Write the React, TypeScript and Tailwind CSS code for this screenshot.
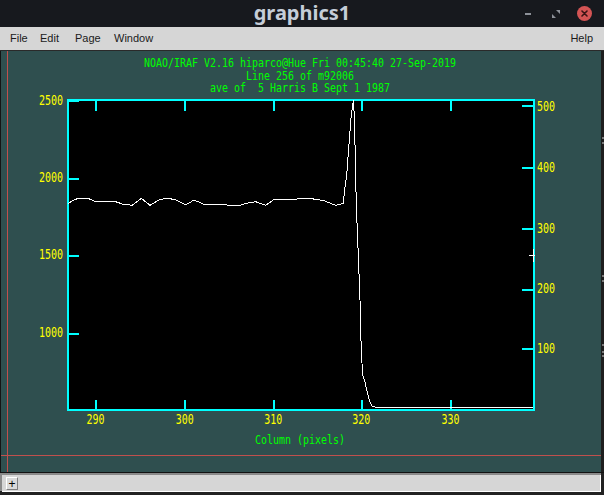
import React from "react";

const MONO = "'DejaVu Sans Mono', 'Liberation Mono', monospace";

function Lbl({
  x,
  y,
  t,
  anchor = "start",
  fill,
  size = 13.5,
}: {
  x: number;
  y: number;
  t: string;
  anchor?: "start" | "middle" | "end";
  fill: string;
  size?: number;
}) {
  return (
    <text
      x={x}
      y={y}
      fill={fill}
      fontFamily={MONO}
      fontSize={size}
      textAnchor={anchor}
      textLength={t.length * 6}
      lengthAdjust="spacingAndGlyphs"
      xmlSpace="preserve"
    >
      {t}
    </text>
  );
}

const curve: [number, number][] = [
  [68, 204], [72.3, 200.7], [79, 198], [87.3, 198], [95.7, 201.7], [100.7, 201.7],
  [115.7, 201.7], [122.3, 204], [132.3, 205.3], [141.3, 198.3], [150, 205.3],
  [159, 200], [167.3, 198], [175.7, 200], [185.7, 205], [194, 200], [203.3, 204],
  [215.7, 204], [237.3, 206], [246.7, 203.3], [255.7, 201.7], [265.7, 205.3],
  [273.3, 200], [284, 199.3], [294, 199.3], [307.3, 198], [324, 200.7],
  [335.7, 205.3], [343.3, 203.3], [345, 186.7], [346.7, 175], [348.3, 153],
  [351, 118], [353.3, 100.5], [354.3, 115], [355.3, 156.7], [356.3, 206.7],
  [357.3, 230], [360, 300], [360.5, 328], [361.7, 358], [362.7, 375], [365, 381.7],
  [366.7, 390], [369.3, 400], [371.7, 406], [376.7, 407.5], [533, 408],
];

function Plot() {
  const cyan = "#00ffff";
  const yellow = "#ffff00";
  const green = "#00ff00";
  const bottomTicks = [95, 184, 273, 361, 450];
  const bottomLabels: [number, string][] = [
    [95.5, "290"], [184.7, "300"], [273.2, "310"], [361.3, "320"], [450.5, "330"],
  ];
  const leftTicks = [100, 178, 255, 333];
  const leftLabels: [number, string][] = [
    [105.3, "2500"], [182.3, "2000"], [259.3, "1500"], [336.7, "1000"],
  ];
  const rightTicks = [105, 167, 228, 289, 348];
  const rightLabels: [number, string][] = [
    [110.7, "500"], [171.7, "400"], [232.5, "300"], [293.3, "200"], [353.3, "100"],
  ];
  return (
    <svg
      width={600}
      height={421}
      viewBox="1 51 600 421"
      shapeRendering="crispEdges"
      className="block"
    >
      {/* header */}
      <Lbl x={300} y={67} size={12.5} anchor="middle" fill={green} t="NOAO/IRAF V2.16 hiparco@Hue Fri 00:45:40 27-Sep-2019" />
      <Lbl x={300} y={80} size={12.5} anchor="middle" fill={green} t="Line 256 of m92006" />
      <Lbl x={300} y={92} size={12.5} anchor="middle" fill={green} t="ave of  5 Harris B Sept 1 1987" />

      {/* plot background */}
      <rect x={67} y={99} width={468} height={312} fill="#000" />
      {/* frame */}
      <rect x={67} y={99} width={468} height={2} fill={cyan} />
      <rect x={67} y={409} width={468} height={2} fill={cyan} />
      <rect x={67} y={99} width={2} height={312} fill={cyan} />
      <rect x={533} y={99} width={2} height={312} fill={cyan} />

      {/* ticks */}
      {bottomTicks.map((x) => (
        <g key={x}>
          <rect x={x} y={99} width={2} height={12} fill={cyan} />
          <rect x={x} y={400} width={2} height={10} fill={cyan} />
        </g>
      ))}
      {leftTicks.map((y) => (
        <rect key={y} x={67} y={y} width={12} height={2} fill={cyan} />
      ))}
      {rightTicks.map((y) => (
        <rect key={y} x={522} y={y} width={12} height={2} fill={cyan} />
      ))}

      {/* data */}
      <polyline
        points={curve.map(([x, y]) => `${x},${y}`).join(" ")}
        fill="none"
        stroke="#ffffff"
        strokeWidth={1}
      />

      {/* small cursor mark */}
      <rect x={529} y={255} width={6} height={1} fill="#fff" />
      <rect x={533} y={249} width={1} height={13} fill="#fff" />

      {/* labels */}
      {leftLabels.map(([y, t]) => (
        <Lbl key={t} x={63} y={y} anchor="end" fill={yellow} t={t} />
      ))}
      {rightLabels.map(([y, t]) => (
        <Lbl key={t} x={537} y={y} fill={yellow} t={t} />
      ))}
      {bottomLabels.map(([x, t]) => (
        <Lbl key={t} x={x} y={424} anchor="middle" fill={yellow} t={t} />
      ))}
      <Lbl x={300} y={443.5} size={12.5} anchor="middle" fill={green} t="Column (pixels)" />

      {/* crosshair cursor */}
      <rect x={7} y={51} width={1} height={421} fill="#c0504d" />
      <rect x={1} y={455} width={600} height={1} fill="#c0504d" />
    </svg>
  );
}

function Grip() {
  return <div className="h-[2px] w-[2px] ml-[1px] bg-[#777]" />;
}

export default function App() {
  return (
    <div className="w-[604px] h-[495px] flex flex-col bg-[#222222] overflow-hidden font-['Liberation_Sans',Arial,sans-serif]">
      {/* title bar */}
      <div className="h-[27px] bg-[#17191e] grid grid-cols-[1fr_auto_1fr] items-center">
        <div />
        <div className="text-[20px] leading-none font-bold text-[#c5cdd8] font-['Noto_Sans',sans-serif] -mt-[2px]">
          graphics1
        </div>
        <div className="flex justify-end items-center gap-3 pr-3">
          <div className="w-4 h-4 flex items-center justify-center">
            <div className="w-[6px] h-[2px] bg-[#8d9199]" />
          </div>
          <div className="w-4 h-4 flex items-center justify-center">
            <svg width="10" height="10" viewBox="0 0 10 10">
              <path d="M5 1 H9 V5 Z" fill="#8d9199" />
              <path d="M1 5 V9 H5 Z" fill="#8d9199" />
            </svg>
          </div>
          <div className="w-4 h-4 flex items-center justify-center">
            <div className="w-[15px] h-[15px] rounded-full bg-[#d45454] flex items-center justify-center">
              <svg width="7" height="7" viewBox="0 0 7 7">
                <path d="M1 1 L6 6 M6 1 L1 6" stroke="#3a1414" strokeWidth="1.6" strokeLinecap="round" />
              </svg>
            </div>
          </div>
        </div>
      </div>

      {/* menu bar */}
      <div className="h-[23px] bg-[#d6d6d6] flex items-center text-[11px] text-[#1a1a1a] pl-[10px] pr-[11px]">
        <span className="w-[30px]">File</span>
        <span className="w-[35px]">Edit</span>
        <span className="w-[39px]">Page</span>
        <span>Window</span>
        <span className="ml-auto">Help</span>
      </div>
      <div className="h-[1px] bg-[#2a2a2a]" />

      {/* graphics canvas */}
      <div className="h-[421px] flex">
        <div className="w-[1px] bg-[#141414]" />
        <div className="w-[600px] bg-[#2f4f4f]">
          <Plot />
        </div>
        <div className="w-[3px] bg-[#1e1e1e] flex flex-col">
          <div className="h-[86px]" />
          <Grip />
          <div className="h-[3px]" />
          <Grip />
          <div className="h-[131px]" />
          <Grip />
          <div className="h-[3px]" />
          <Grip />
          <div className="h-[62px]" />
          <Grip />
          <div className="h-[5px]" />
          <Grip />
          <div className="h-[2px]" />
          <Grip />
        </div>
      </div>

      {/* status bar */}
      <div className="h-[1px] bg-[#121212]" />
      <div className="h-[2px] bg-[#8a8a8a] mr-[3px]" />
      <div className="h-[16px] flex mr-[3px]">
        <div className="w-[2px] bg-[#8a8a8a]" />
        <div className="flex-1 bg-[#d6d6d6] border-r border-white flex items-start pl-[4px] pt-[2px]">
          <div className="w-[12px] h-[13px] bg-[#dadada] border-t border-l border-t-white border-l-white border-r border-b border-r-[#808080] border-b-[#808080] flex items-center justify-center text-[12px] leading-none text-black">
            +
          </div>
        </div>
      </div>
      <div className="h-[1px] bg-white ml-[2px] mr-[3px]" />
    </div>
  );
}
